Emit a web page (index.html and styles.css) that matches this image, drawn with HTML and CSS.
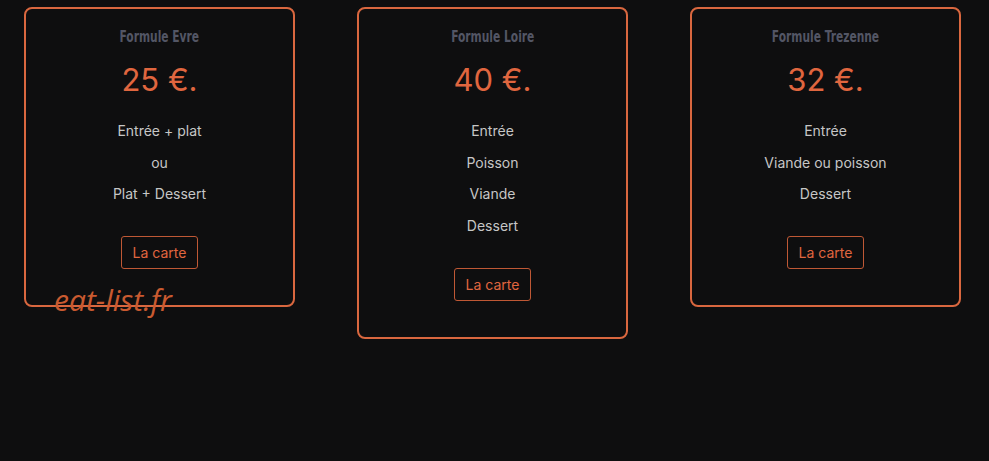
FILE: index.html
```html
<!DOCTYPE html>
<html lang="fr">
<head>
<meta charset="utf-8">
<title>Nos formules</title>
<link rel="stylesheet" href="styles.css">
</head>
<body>
<main class="formules">
  <section class="card">
    <h2 class="card-title">Formule Evre</h2>
    <p class="price">25 €.</p>
    <ul class="items">
      <li>Entrée + plat</li>
      <li>ou</li>
      <li>Plat + Dessert</li>
    </ul>
    <a class="btn" href="#">La carte</a>
  </section>
  <section class="card">
    <h2 class="card-title">Formule Loire</h2>
    <p class="price">40 €.</p>
    <ul class="items">
      <li>Entrée</li>
      <li>Poisson</li>
      <li>Viande</li>
      <li>Dessert</li>
    </ul>
    <a class="btn" href="#">La carte</a>
  </section>
  <section class="card">
    <h2 class="card-title">Formule Trezenne</h2>
    <p class="price">32 €.</p>
    <ul class="items">
      <li>Entrée</li>
      <li>Viande ou poisson</li>
      <li>Dessert</li>
    </ul>
    <a class="btn" href="#">La carte</a>
  </section>
</main>
<div class="watermark">eat-list.fr</div>
</body>
</html>
```
FILE: styles.css
```css
html, body {
  margin: 0;
  padding: 0;
  background: #0e0e0f;
  height: 100%;
}

body {
  font-family: Inter, "Noto Sans", sans-serif;
  color: #c9c9c9;
  position: relative;
}

.formules {
  display: flex;
  align-items: flex-start;
  gap: 62px;
  padding: 7px 0 0 24px;
}

.card {
  box-sizing: border-box;
  width: 271px;
  border: 2px solid #d9673f;
  border-radius: 8px;
  padding: 16px 10px 36px;
  display: flex;
  flex-direction: column;
  align-items: center;
  text-align: center;
}

/* condensed display face for the formula names */
.card-title {
  margin: 0;
  font-family: "DejaVu Sans Condensed", "Liberation Sans Narrow", sans-serif;
  font-weight: 700;
  font-size: 16.5px;
  line-height: 24px;
  color: #535665;
  white-space: nowrap;
  transform: scaleX(0.72);
}

.price {
  margin: 11px 0 0;
  font-size: 31px;
  line-height: 40px;
  font-weight: 400;
  color: #e0663f;
}

.items {
  list-style: none;
  margin: 20px 0 0;
  padding: 0;
  display: flex;
  flex-direction: column;
  gap: 10.5px;
}

.items li {
  font-size: 14px;
  line-height: 21px;
  color: #c6c6c6;
}

.btn {
  margin-top: 32px;
  box-sizing: border-box;
  height: 33px;
  padding: 0 11px;
  display: flex;
  align-items: center;
  border: 1px solid #bf5835;
  border-radius: 3px;
  color: #e0663f;
  font-size: 14px;
  text-decoration: none;
}

.watermark {
  position: absolute;
  left: 54px;
  top: 280px;
  font-family: "Open Sans", sans-serif;
  font-style: italic;
  font-size: 30px;
  line-height: 40px;
  color: #c95a30;
}
```
